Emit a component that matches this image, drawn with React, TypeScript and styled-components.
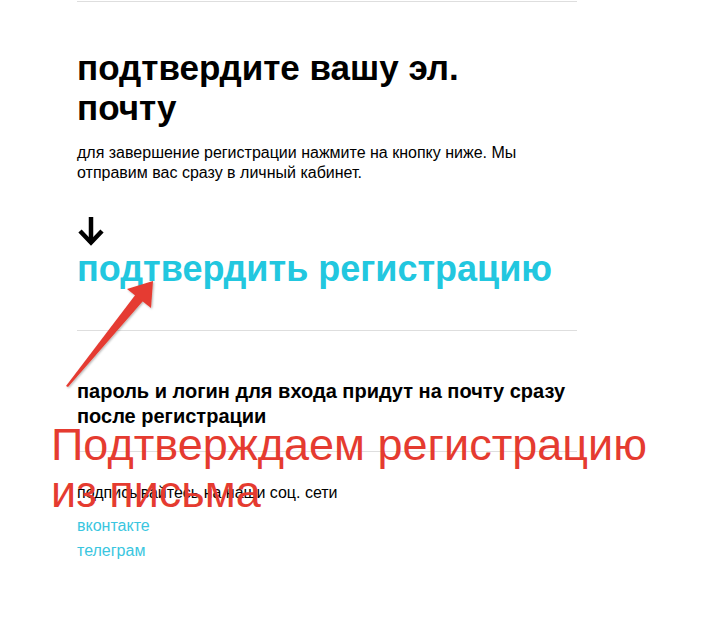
import React from "react";
import styled, { createGlobalStyle } from "styled-components";

const Global = createGlobalStyle`
  html, body { margin: 0; padding: 0; background: #ffffff; }
  body { font-family: "Liberation Sans", Arial, sans-serif; color: #000; }
`;

const Page = styled.div`
  position: relative;
  width: 702px;
  height: 628px;
  overflow: hidden;
  padding-left: 77px;
  box-sizing: border-box;
`;

const Column = styled.div`
  width: 500px;
  display: flex;
  flex-direction: column;
`;

const Rule = styled.div<{ $top: number; $bottom: number }>`
  height: 1px;
  background: #dedede;
  margin-top: ${(p) => p.$top}px;
  margin-bottom: ${(p) => p.$bottom}px;
`;

const Title = styled.h1`
  margin: 0;
  max-width: 460px;
  font-size: 35px;
  line-height: 40px;
  font-weight: 700;
`;

const Lead = styled.p`
  margin: 15px 0 0;
  font-size: 16px;
  line-height: 20px;
`;

const DownArrow = styled.svg`
  display: block;
  margin-top: 33px;
  width: 28px;
  height: 30px;
`;

const ConfirmLink = styled.a`
  display: block;
  font-size: 36px;
  line-height: 40px;
  font-weight: 700;
  color: #22c7df;
  text-decoration: none;
  margin-top: 3px;
  white-space: nowrap;
`;

const SubTitle = styled.h2`
  margin: 0;
  font-size: 20px;
  line-height: 25px;
  font-weight: 700;
`;

const Small = styled.p`
  margin: 0;
  font-size: 16px;
  line-height: 20px;
`;

const SocialList = styled.div`
  display: flex;
  flex-direction: column;
  margin-top: 10px;
`;

const SocialLink = styled.a`
  font-size: 16px;
  line-height: 25px;
  color: #3ac6e0;
  text-decoration: none;
`;

const Annotation = styled.div`
  position: absolute;
  left: 51px;
  top: 421px;
  font-size: 45px;
  line-height: 47px;
  color: #e53b30;
  font-family: "Liberation Sans", Arial, sans-serif;
  white-space: nowrap;
`;

const Pointer = styled.svg`
  position: absolute;
  left: 0;
  top: 0;
  width: 702px;
  height: 628px;
  pointer-events: none;
`;

export default function App() {
  return (
    <>
      <Global />
      <Page>
        <Column>
          <Rule $top={1} $bottom={46} />
          <Title>подтвердите вашу эл. почту</Title>
          <Lead>
            для завершение регистрации нажмите на кнопку ниже. Мы отправим вас
            сразу в личный кабинет.
          </Lead>
          <DownArrow viewBox="0 0 28 30">
            <path d="M14 1 V27" stroke="#000" strokeWidth="4.5" fill="none" />
            <path
              d="M3 15 L14 26.5 L25 15"
              stroke="#000"
              strokeWidth="4.5"
              fill="none"
              strokeLinejoin="miter"
            />
          </DownArrow>
          <ConfirmLink href="#">подтвердить регистрацию</ConfirmLink>
          <Rule $top={41} $bottom={48} />
          <SubTitle>пароль и логин для входа придут на почту сразу после регистрации</SubTitle>
          <Rule $top={22} $bottom={31} />
          <Small>подписывайтесь на наши соц. сети</Small>
          <SocialList>
            <SocialLink href="#">вконтакте</SocialLink>
            <SocialLink href="#">телеграм</SocialLink>
          </SocialList>
        </Column>
        <Pointer viewBox="0 0 702 628">
          <defs>
            <filter id="sh" x="-20%" y="-20%" width="140%" height="140%">
              <feDropShadow dx="1" dy="1" stdDeviation="1" floodColor="#000" floodOpacity="0.3" />
            </filter>
          </defs>
          <g filter="url(#sh)">
            <polygon points="66,386 68,387 143,301 136,294" fill="#e53b30" />
            <polygon points="153,281 127,289 151,308" fill="#e53b30" />
          </g>
        </Pointer>
        <Annotation>
          Подтверждаем регистрацию
          <br />
          из письма
        </Annotation>
      </Page>
    </>
  );
}
